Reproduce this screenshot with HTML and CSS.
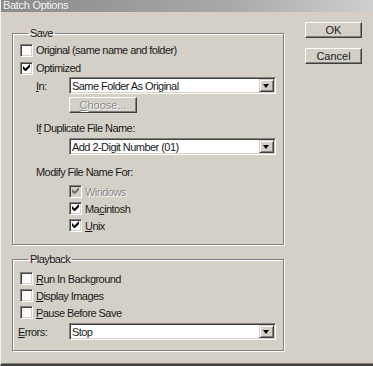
FILE: index.html
```html
<!DOCTYPE html>
<html lang="en">
<head>
    <meta charset="UTF-8">
    <title>Batch Options</title>
    <link rel="stylesheet" href="styles.css">
</head>
<body>

<div class="window">
    <div class="titlebar">Batch Options</div>
    <div class="dialog">
        <div class="groups">
            <fieldset class="group group-save">
                <legend>Save</legend>
                <label class="check-row">
                    <span class="checkbox"></span>
                    <span>Original (same name and folder)</span>
                </label>
                <label class="check-row">
                    <span class="checkbox checked"></span>
                    <span>Optimized</span>
                </label>
                <div class="field-row">
                    <span class="field-label"><u>I</u>n:</span>
                    <div class="combo"><span class="combo-text">Same Folder As Original</span><span class="combo-btn"></span></div>
                </div>
                <button class="btn btn-choose" disabled><u>C</u>hoose...</button>
                <div class="caption">I<u>f</u> Duplicate File Name:</div>
                <div class="combo combo-indent"><span class="combo-text">Add 2-Digit Number (01)</span><span class="combo-btn"></span></div>
                <div class="caption caption-modify">Modify File Name For:</div>
                <label class="check-row sub disabled">
                    <span class="checkbox checked"></span>
                    <span>Windows</span>
                </label>
                <label class="check-row sub">
                    <span class="checkbox checked"></span>
                    <span>Ma<u>c</u>intosh</span>
                </label>
                <label class="check-row sub">
                    <span class="checkbox checked"></span>
                    <span><u>U</u>nix</span>
                </label>
            </fieldset>

            <fieldset class="group group-playback">
                <legend>Playback</legend>
                <label class="check-row short">
                    <span class="checkbox"></span>
                    <span><u>R</u>un In Background</span>
                </label>
                <label class="check-row short">
                    <span class="checkbox"></span>
                    <span><u>D</u>isplay Images</span>
                </label>
                <label class="check-row short">
                    <span class="checkbox"></span>
                    <span><u>P</u>ause Before Save</span>
                </label>
                <div class="field-row field-errors">
                    <span class="field-label"><u>E</u>rrors:</span>
                    <div class="combo"><span class="combo-text">Stop</span><span class="combo-btn"></span></div>
                </div>
            </fieldset>
        </div>

        <div class="actions">
            <button class="btn">OK</button>
            <button class="btn">Cancel</button>
        </div>
    </div>
</div>

</body>
</html>
```

FILE: styles.css
```css
/* Jendela dialog gaya Windows klasik */
body {
    margin: 0;
    font-family: "Liberation Sans", Arial, sans-serif;
    font-size: 11px;
    letter-spacing: -0.55px;
    color: #1a1a1a;
    background-color: #d4d0c8;
}
.window {
    width: 373px;
    height: 366px;
    box-sizing: border-box;
    border-left: 1px solid #f0f0f0;
    border-bottom: 2px solid #404040;
    box-shadow: inset 0 -1px 0 #808080;
    overflow: hidden;
}
.titlebar {
    height: 12px;
    line-height: 11px;
    padding-left: 2px;
    color: #f4f4f4;
    background: linear-gradient(to right, #8a8a8a, #a8a8a8 60%, #cfcfcf);
    letter-spacing: -0.3px;
}
.dialog {
    display: flex;
    align-items: flex-start;
}
.groups {
    width: 272px;
    margin-left: 11px;
    margin-top: 15px;
}
.group {
    margin: 0;
    min-width: 0;
    padding: 1px 0 10px 7px;
    border: 1px solid #808080;
    box-shadow: 1px 1px 0 #fff, inset 1px 1px 0 #fff;
}
.group legend {
    margin-left: 8px;
    padding: 0 2px;
    line-height: 13px;
}
.group-playback {
    margin-top: 8px;
    padding-top: 4px;
}
.check-row {
    display: flex;
    align-items: center;
    height: 18px;
}
.check-row.sub {
    height: 17px;
    margin-left: 49px;
}
.caption-modify + .check-row {
    margin-top: 4px;
}
.check-row.short {
    height: 17px;
}
.checkbox {
    position: relative;
    width: 13px;
    height: 13px;
    box-sizing: border-box;
    margin-right: 3px;
    background-color: #fbfbfb;
    border: 1px solid;
    border-color: #808080 #fff #fff #808080;
    box-shadow: inset 1px 1px 0 #404040, inset -1px -1px 0 #d4d0c8;
}
.checkbox.checked::after {
    content: "";
    position: absolute;
    left: 2px;
    top: 1px;
    width: 7px;
    height: 7px;
    background: url("data:image/svg+xml,%3Csvg xmlns='http://www.w3.org/2000/svg' width='7' height='7'%3E%3Cpath d='M0 2v3l2 2h1l4-4V0L2.5 4.5z' fill='%23000'/%3E%3C/svg%3E") no-repeat;
}
.disabled {
    color: #8a8a8a;
    text-shadow: 1px 1px 0 #fff;
}
.disabled .checkbox {
    background-color: #d4d0c8;
}
.disabled .checkbox.checked::after {
    opacity: 0.45;
}
.field-row {
    display: flex;
    align-items: center;
}
.field-label {
    width: 33px;
    margin-left: 16px;
}
.combo {
    display: flex;
    align-items: center;
    width: 207px;
    height: 17px;
    box-sizing: border-box;
    background-color: #fff;
    border: 1px solid;
    border-color: #808080 #fff #fff #808080;
    box-shadow: inset 1px 1px 0 #404040, inset -1px -1px 0 #d4d0c8;
}
.combo-text {
    flex: 1;
    padding-left: 2px;
    white-space: nowrap;
}
.combo-btn {
    position: relative;
    width: 15px;
    height: 13px;
    margin-right: 1px;
    box-sizing: border-box;
    background-color: #d4d0c8;
    border: 1px solid;
    border-color: #d4d0c8 #404040 #404040 #d4d0c8;
    box-shadow: inset 1px 1px 0 #fff, inset -1px -1px 0 #808080;
}
.combo-btn::after {
    content: "";
    position: absolute;
    left: 3px;
    top: 4px;
    border-left: 3.5px solid transparent;
    border-right: 3.5px solid transparent;
    border-top: 4px solid #000;
}
.combo-indent {
    margin-left: 49px;
    margin-top: 3px;
}
.caption {
    margin-left: 16px;
    margin-top: 9px;
    line-height: 13px;
}
.caption-modify {
    margin-top: 11px;
}
.btn {
    display: block;
    width: 57px;
    height: 16px;
    padding: 0;
    font: inherit;
    color: #1a1a1a;
    background-color: #d4d0c8;
    border: 1px solid;
    border-color: #fff #404040 #404040 #fff;
    box-shadow: inset -1px -1px 0 #808080;
    line-height: 13px;
}
.btn-choose {
    width: 68px;
    margin: 3px 0 0 49px;
}
.btn:disabled {
    color: #8a8a8a;
    text-shadow: 1px 1px 0 #fff;
}
.field-errors {
    margin-top: 2px;
}
.field-errors .field-label {
    width: 51px;
    margin-left: -2px;
}
.actions {
    display: flex;
    flex-direction: column;
    gap: 10px;
    margin-left: 21px;
    margin-top: 10px;
}
```
